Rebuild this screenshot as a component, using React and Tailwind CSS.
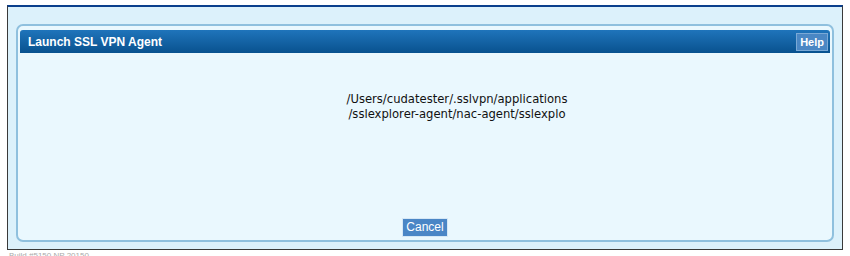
import React from 'react';

const App = () => {
  return (
    <div className="w-[850px] h-[256px] bg-white overflow-hidden pt-[5px] pl-[7px]" style={{ fontFamily: '"Liberation Sans", Arial, sans-serif' }}>
      <div className="w-[836px] h-[245px] bg-[#dcf1fb] border-t-2 border-t-[#0b3f8c] border-x border-b border-x-[#3a3a3a] border-b-[#3a3a3a] pt-[17px] px-[8px]">
        <div className="h-[218px] rounded-[7px] border-2 border-[#8fc0de] bg-[#eaf8fe] px-[2px] pt-[4px] flex flex-col">
          <div className="h-[23px] rounded-t-[3px] bg-gradient-to-b from-[#1f74bb] to-[#08528f] flex items-center justify-between pl-[8px] pr-[2px]">
            <span className="text-white font-bold text-[12px]">Launch SSL VPN Agent</span>
            <span className="h-[18px] px-[3px] bg-[#4a87c4] border border-[#7aa9d6] text-white font-bold text-[11px] leading-[16px]">Help</span>
          </div>
          <div className="flex-1 flex flex-col items-center">
            <div className="mt-[39px] ml-[64px] text-[11.6px] leading-[15px] text-[#111] text-center" style={{ fontFamily: '"DejaVu Sans", Verdana, sans-serif' }}>
              <div>/Users/cudatester/.sslvpn/applications</div>
              <div>/sslexplorer-agent/nac-agent/sslexplo</div>
            </div>
            <button className="mt-auto mb-[3px] h-[19px] px-[3px] bg-[#4a86c6] border border-[#d6e8f6] text-white text-[12px] leading-[17px]">Cancel</button>
          </div>
        </div>
      </div>
      <div className="text-[8px] text-[#aaa] leading-[10px] mt-[1px] pl-[2px]">Build #5150 NP 20150</div>
    </div>
  );
};

export default App;
